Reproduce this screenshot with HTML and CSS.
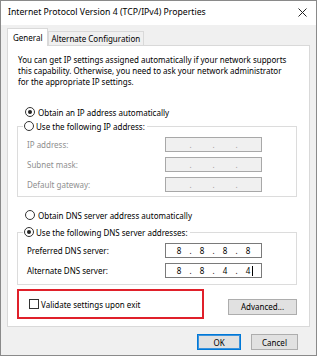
FILE: index.html
```html
<!DOCTYPE html>
<html>
<head>
<meta charset="utf-8">
<title>Internet Protocol Version 4 (TCP/IPv4) Properties</title>
<link rel="stylesheet" href="styles.css">
</head>
<body>
<div class="window">
  <div class="titlebar">
    <span class="title">Internet Protocol Version 4 (TCP/IPv4) Properties</span>
    <svg class="close" width="9" height="9" viewBox="0 0 9 9"><path d="M0.5 0.5L8.5 8.5M8.5 0.5L0.5 8.5" stroke="#222" stroke-width="1" fill="none"/></svg>
  </div>
  <div class="body">
    <div class="tabs">
      <div class="tab active">General</div>
      <div class="tab">Alternate Configuration</div>
    </div>
    <div class="panel">
      <p class="intro">You can get IP settings assigned automatically if your network supports<br>this capability. Otherwise, you need to ask your network administrator<br>for the appropriate IP settings.</p>
      <div class="radio-row ip-auto"><span class="radio checked"></span><span>Obtain an IP address automatically</span></div>
      <fieldset class="group ip-group">
        <legend><span class="legend-inner"><span class="radio"></span><span>Use the following IP address:</span></span></legend>
        <div class="field disabled"><span class="label">IP address:</span><span class="ipbox"><span class="seg"></span><span class="dot">.</span><span class="seg"></span><span class="dot">.</span><span class="seg"></span><span class="dot">.</span><span class="seg"></span></span></div>
        <div class="field disabled"><span class="label">Subnet mask:</span><span class="ipbox"><span class="seg"></span><span class="dot">.</span><span class="seg"></span><span class="dot">.</span><span class="seg"></span><span class="dot">.</span><span class="seg"></span></span></div>
        <div class="field disabled"><span class="label">Default gateway:</span><span class="ipbox"><span class="seg"></span><span class="dot">.</span><span class="seg"></span><span class="dot">.</span><span class="seg"></span><span class="dot">.</span><span class="seg"></span></span></div>
      </fieldset>
      <div class="radio-row dns-auto"><span class="radio"></span><span>Obtain DNS server address automatically</span></div>
      <fieldset class="group dns-group">
        <legend><span class="legend-inner"><span class="radio checked"></span><span>Use the following DNS server addresses:</span></span></legend>
        <div class="field"><span class="label">Preferred DNS server:</span><span class="ipbox"><span class="seg">8</span><span class="dot">.</span><span class="seg">8</span><span class="dot">.</span><span class="seg">8</span><span class="dot">.</span><span class="seg">8</span></span></div>
        <div class="field"><span class="label">Alternate DNS server:</span><span class="ipbox"><span class="seg">8</span><span class="dot">.</span><span class="seg">8</span><span class="dot">.</span><span class="seg">4</span><span class="dot">.</span><span class="seg">4<span class="caret"></span></span></span></div>
      </fieldset>
      <div class="validate-row">
        <div class="highlight"><span class="checkbox"></span><span>Validate settings upon exit</span></div>
        <button class="btn advanced" type="button">Advanced...</button>
      </div>
    </div>
    <div class="buttons">
      <button class="btn ok" type="button">OK</button>
      <button class="btn" type="button">Cancel</button>
    </div>
  </div>
</div>
</body>
</html>
```
FILE: styles.css
```css
* { box-sizing: border-box; }
html, body { margin: 0; padding: 0; background: #fff; }
body {
  font-family: "Noto Sans", "Open Sans", sans-serif;
  font-size: 8px;
  color: #000;
  white-space: nowrap;
}
.window {
  width: 317px;
  height: 356px;
  border: 1px solid #8a8a8a;
  background: #f0f0f0;
  display: flex;
  flex-direction: column;
}
.titlebar {
  height: 24px;
  flex: none;
  background: #fff;
  display: flex;
  align-items: center;
  justify-content: space-between;
  padding: 0 9px 2px 7px;
  font-size: 8.7px;
}
.close { display: block; }
.body {
  flex: 1;
  padding: 3px 6px 0 6px;
  display: flex;
  flex-direction: column;
}
.tabs {
  display: flex;
  align-items: flex-end;
  height: 17px;
  flex: none;
}
.tab {
  height: 14px;
  padding: 0 3px;
  border: 1px solid #d9d9d9;
  border-bottom: none;
  background: #f0f0f0;
  display: flex;
  align-items: center;
}
.tab.active {
  height: 18px;
  margin-bottom: -1px;
  padding: 0 4px 0 5px;
  background: #fff;
  position: relative;
  z-index: 1;
}
.panel {
  height: 282px;
  flex: none;
  background: #fff;
  border: 1px solid #d9d9d9;
  padding: 8px 12px 0 9px;
  overflow: hidden;
}
.intro {
  margin: 0;
  padding-left: 1px;
  line-height: 11px;
}
.radio-row {
  display: flex;
  align-items: center;
  height: 12px;
  padding-left: 8px;
}
.ip-auto { margin-top: 19px; }
.dns-auto { margin-top: 12px; }
.radio {
  width: 10px;
  height: 10px;
  border: 1px solid #333;
  border-radius: 50%;
  margin-right: 3px;
  flex: none;
  display: flex;
  align-items: center;
  justify-content: center;
}
.radio.checked::after {
  content: "";
  width: 4px;
  height: 4px;
  border-radius: 50%;
  background: #222;
}
.group {
  margin: 2px 0 0 0;
  padding: 5px 0 4px 0;
  border: 1px solid #dcdcdc;
  min-width: 0;
}
.dns-group { margin-top: 5px; padding-bottom: 6px; }
.group legend {
  margin-left: 5px;
  padding: 0 2px 0 1px;
}
.legend-inner {
  display: flex;
  align-items: center;
  height: 12px;
}
.legend-inner .radio { margin-right: 2px; }
.field {
  display: flex;
  align-items: center;
  height: 15px;
  padding-left: 9px;
}
.field + .field { margin-top: 5px; }
.label { width: 138px; flex: none; }
.disabled .label { color: #8f8f8f; }
.ipbox {
  width: 97px;
  height: 15px;
  flex: none;
  border: 1px solid #7a7a7a;
  background: #fff;
  display: flex;
  align-items: center;
  padding-left: 4px;
}
.disabled .ipbox {
  background: #f0f0f0;
  border-color: #a8a8a8;
  color: #9a9a9a;
}
.seg {
  width: 18px;
  flex: none;
  text-align: center;
  position: relative;
}
.dot {
  width: 5px;
  flex: none;
  text-align: center;
}
.caret {
  position: absolute;
  right: 4px;
  top: 1px;
  width: 1px;
  height: 10px;
  background: #000;
}
.validate-row {
  margin-top: 4px;
  display: flex;
  align-items: center;
  justify-content: space-between;
}
.highlight {
  width: 187px;
  height: 30px;
  flex: none;
  border: 2px solid #e0202a;
  display: flex;
  align-items: center;
  padding-left: 10px;
}
.checkbox {
  width: 10px;
  height: 10px;
  border: 1px solid #333;
  margin-right: 2px;
  flex: none;
}
.btn {
  font-family: inherit;
  font-size: 8px;
  color: #000;
  height: 16px;
  padding: 0;
  background: #e1e1e1;
  border: 1px solid #adadad;
  border-radius: 0;
}
.advanced {
  width: 69px;
  margin-top: 5px;
}
.buttons {
  margin-top: 7px;
  display: flex;
  justify-content: flex-end;
  gap: 10px;
  padding-right: 12px;
}
.buttons .btn { width: 47px; }
.buttons .btn.ok {
  width: 44px;
  border-color: #0078d7;
  box-shadow: inset 0 0 0 1px #3c93dc;
}
```
